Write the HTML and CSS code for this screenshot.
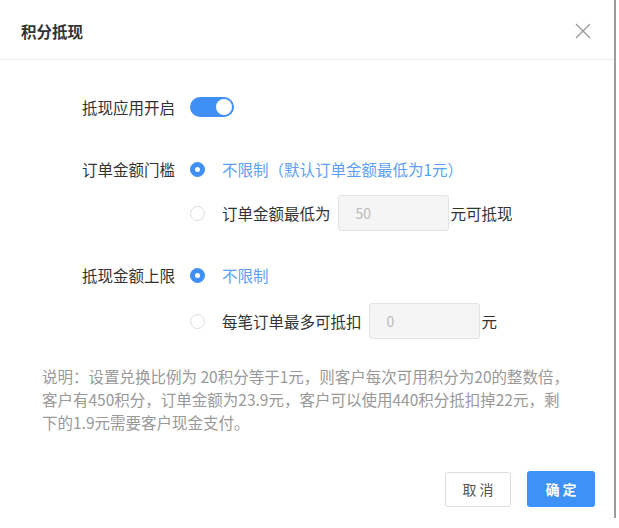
FILE: index.html
```html
<!DOCTYPE html>
<html lang="zh-CN">
<head>
<meta charset="utf-8">
<title>积分抵现</title>
<link rel="stylesheet" href="styles.css">
</head>
<body>
<div class="dialog">
  <div class="header">
    <span class="title">积分抵现</span>
    <svg class="close" width="16" height="16" viewBox="0 0 16 16"><path d="M1 1L15 15M15 1L1 15" stroke="#9a9a9a" stroke-width="1.4" fill="none"/></svg>
  </div>
  <div class="body">
    <div class="row row-toggle">
      <span class="label">抵现应用开启</span>
      <span class="switch"><span class="knob"></span></span>
    </div>

    <div class="group group-first">
      <div class="row opt">
        <span class="label">订单金额门槛</span>
        <span class="radio checked"></span>
        <span class="opt-text active">不限制（默认订单金额最低为1元）</span>
      </div>
      <div class="row opt opt-input">
        <span class="label"></span>
        <span class="radio"></span>
        <span class="opt-text">订单金额最低为</span>
        <span class="input">50</span>
        <span class="opt-text">元可抵现</span>
      </div>
    </div>

    <div class="group group-second">
      <div class="row opt">
        <span class="label">抵现金额上限</span>
        <span class="radio checked"></span>
        <span class="opt-text active">不限制</span>
      </div>
      <div class="row opt opt-input">
        <span class="label"></span>
        <span class="radio"></span>
        <span class="opt-text">每笔订单最多可抵扣</span>
        <span class="input">0</span>
        <span class="opt-text">元</span>
      </div>
    </div>

    <p class="desc">说明：设置兑换比例为 20积分等于1元，则客户每次可用积分为20的整数倍，<br>客户有450积分，订单金额为23.9元，客户可以使用440积分抵扣掉22元，剩<br>下的1.9元需要客户现金支付。</p>
  </div>
  <div class="footer">
    <button class="btn btn-cancel">取 消</button>
    <button class="btn btn-ok">确 定</button>
  </div>
</div>
</body>
</html>
```

FILE: styles.css
```css
html, body {
  margin: 0;
  padding: 0;
  background: #ffffff;
}
body {
  width: 619px;
  height: 528px;
  overflow: hidden;
  font-family: "Noto Sans CJK SC", "Noto Sans", sans-serif;
  color: #333333;
}
.dialog {
  width: 614px;
  height: 518px;
  border-right: 2px solid #9c9c9c;
  display: flex;
  flex-direction: column;
  background: #ffffff;
}
.header {
  height: 60px;
  border-bottom: 1px solid #eeeeee;
  display: flex;
  align-items: center;
  justify-content: space-between;
  padding: 2px 23px 0 21px;
  box-sizing: border-box;
}
.title {
  font-size: 15.5px;
  font-weight: bold;
  color: #333;
  line-height: 22px;
}
.close {
  display: block;
}
.body {
  padding: 0 0 0 42px;
}
.row {
  display: flex;
  align-items: center;
  padding-left: 40px;
  font-size: 15.5px;
  line-height: 24px;
}
.label {
  width: 108px;
  flex: none;
  color: #333;
}
.row-toggle {
  margin-top: 36px;
  height: 22px;
}
.switch {
  width: 44px;
  height: 20px;
  border-radius: 10px;
  background: #3f8ff6;
  position: relative;
  flex: none;
}
.knob {
  position: absolute;
  right: 2px;
  top: 2px;
  width: 16px;
  height: 16px;
  border-radius: 50%;
  background: #ffffff;
}
.group-first {
  margin-top: 39px;
}
.group-second {
  margin-top: 32px;
}
.opt {
  height: 24px;
}
.opt-input {
  height: 36px;
  margin-top: 14px;
}
.group-second .opt-input {
  margin-top: 16px;
}
.radio {
  width: 15px;
  height: 15px;
  border-radius: 50%;
  box-sizing: border-box;
  border: 1px solid #dcdcdc;
  background: #fff;
  flex: none;
  margin-right: 17px;
  position: relative;
}
.radio.checked {
  background: #3f8ff6;
  border-color: #3f8ff6;
}
.radio.checked::after {
  content: "";
  position: absolute;
  left: 4px;
  top: 4px;
  width: 5px;
  height: 5px;
  border-radius: 50%;
  background: #fff;
}
.opt-text {
  color: #333;
  white-space: nowrap;
}
.opt-text.active {
  color: #5c9ff4;
}
.input {
  width: 111px;
  height: 36px;
  box-sizing: border-box;
  border: 1px solid #e3e3e3;
  background: #f5f5f5;
  border-radius: 3px;
  color: #bbbbbb;
  padding-left: 17px;
  line-height: 34px;
  font-size: 14px;
  margin: 0 2px 0 7px;
  flex: none;
}
.desc {
  margin: 26px 0 0 0;
  font-size: 15.5px;
  line-height: 23px;
  color: #999999;
  white-space: nowrap;
}
.footer {
  display: flex;
  justify-content: flex-end;
  align-items: center;
  gap: 16px;
  margin-top: auto;
  padding: 0 19px 11px 0;
}
.btn {
  font-family: "Noto Sans CJK SC", "Noto Sans", sans-serif;
  font-size: 14px;
  border-radius: 3px;
  cursor: pointer;
  padding: 0;
  line-height: 20px;
}
.btn-cancel {
  width: 66px;
  height: 35px;
  border: 1px solid #dddddd;
  background: #ffffff;
  color: #555555;
}
.btn-ok {
  width: 68px;
  height: 36px;
  border: none;
  background: #3e91f7;
  color: #ffffff;
  font-weight: bold;
}
```
